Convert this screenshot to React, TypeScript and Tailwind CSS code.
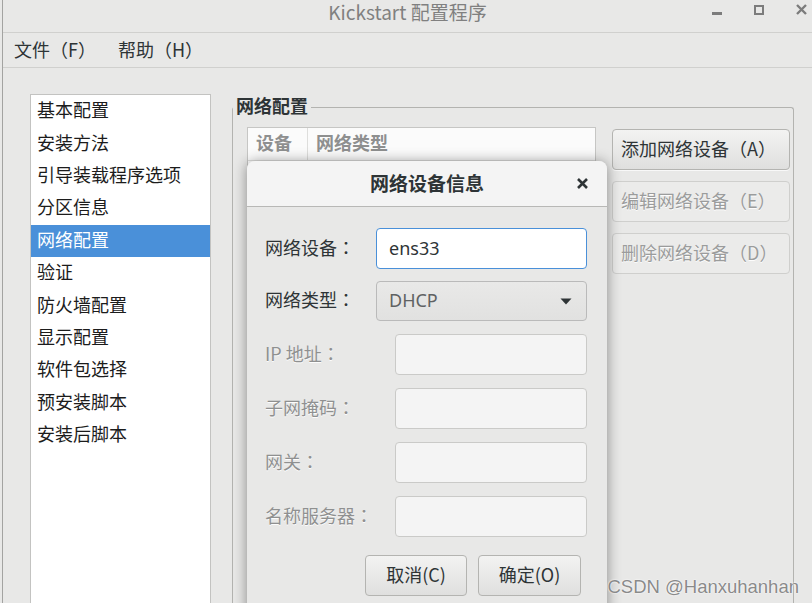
import React from 'react';

const sections = [
  '基本配置',
  '安装方法',
  '引导装载程序选项',
  '分区信息',
  '网络配置',
  '验证',
  '防火墙配置',
  '显示配置',
  '软件包选择',
  '预安装脚本',
  '安装后脚本',
];

const SideButton: React.FC<{ label: string; disabled?: boolean }> = ({ label, disabled }) => (
  <div
    className={
      disabled
        ? 'flex h-[41px] w-full items-center rounded-[4px] border border-[#cfcfcd] bg-[#ebebea] pb-[4px] pl-[8px] text-[#9b9c9c] [text-shadow:0_1px_0_rgba(255,255,255,0.9)]'
        : 'flex h-[41px] w-full items-center rounded-[4px] border border-[#b4b4b1] bg-linear-to-b from-[#f3f3f2] to-[#dfdfde] pb-[4px] pl-[8px] text-[#2e3436] shadow-[0_1px_0_rgba(255,255,255,0.7)]'
    }
  >
    {label}
  </div>
);

// fullwidth colon drawn centred, as the GTK dialog shows it
const Colon = () => <span className="font-['Noto_Sans_CJK_TC',sans-serif]">：</span>;

const FieldRow: React.FC<{ label: string; labelWidth: string; disabled?: boolean; className?: string; children: React.ReactNode }> = ({
  label,
  labelWidth,
  disabled,
  className,
  children,
}) => (
  <div className={`flex items-center ${className ?? ''}`}>
    <div
      className={
        disabled
          ? `${labelWidth} shrink-0 pb-[4px] text-[#8f9090] [text-shadow:0_1px_0_rgba(255,255,255,0.9)]`
          : `${labelWidth} shrink-0 pb-[4px] text-[#2e3436]`
      }
    >
      {label}
      <Colon />
    </div>
    {children}
  </div>
);

const DisabledEntry = () => (
  <div className="h-[41px] flex-1 rounded-[4px] border border-[#cacac8] bg-[#f4f4f4]" />
);

export default function App() {
  return (
    <div className="h-[603px] w-[812px] overflow-hidden bg-[#e8e8e7] pl-[2px] font-['Noto_Sans_CJK_SC','Noto_Sans',sans-serif] text-[18px] leading-none">
      <div className="relative h-full border-l border-[#a3a3a1]">
        {/* title bar */}
        <div className="relative flex h-[33px] justify-center border-b border-[#d0d0ce] pt-[1px]">
          <span className="text-[19px] leading-[21px] text-[#808080]">Kickstart 配置程序</span>
          <div className="absolute right-[5px] top-[4px] flex items-start">
            <div className="mr-[32px] mt-[8px] h-[3px] w-[10px] bg-[#7c7c7c]" />
            <div className="mr-[32px] mt-[1px] h-[10px] w-[10px] border-2 border-[#7c7c7c]" />
            <svg width="11" height="11" viewBox="0 0 11 11">
              <path d="M1 1 L10 10 M10 1 L1 10" stroke="#7c7c7c" strokeWidth="2.4" />
            </svg>
          </div>
        </div>

        {/* menu bar */}
        <div className="flex h-[35px] items-center border-b border-[#d0d0ce] pb-[2px] pl-[11px] text-[#2e3436]">
          <span className="w-[104px]">文件（F）</span>
          <span>帮助（H）</span>
        </div>

        {/* content */}
        <div className="flex pl-[27px] pt-[26px]">
          <div className="h-[520px] w-[181px] shrink-0 border border-[#c3c3c1] bg-white">
            {sections.map((s) => (
              <div
                key={s}
                className={
                  s === '网络配置'
                    ? 'flex h-[32.4px] items-center bg-[#4a90d9] pb-[4px] pl-[6px] text-white'
                    : 'flex h-[32.4px] items-center pb-[4px] pl-[6px] text-[#1c1c1c]'
                }
              >
                {s}
              </div>
            ))}
          </div>

          <fieldset className="ml-[21px] h-[530px] w-[562px] shrink-0 rounded-[3px] border border-b-0 border-[#b3b3b0]">
            <legend className="h-[26px] px-[3px] pb-[4px] text-[18px] leading-[22px] font-bold text-[#2e3436]">网络配置</legend>
            <div className="flex pl-[14px] pr-[3px] pt-[7px]">
              <div className="h-[500px] w-[349px] shrink-0 border border-[#c6c6c4] bg-white">
                <div className="flex h-[33px] items-center border-b border-[#dededc] bg-[#fbfbfb] font-bold text-[#8e8f8f]">
                  <div className="flex h-full w-[60px] items-center border-r border-[#dededc] pb-[5px] pl-[8px]">设备</div>
                  <div className="pb-[5px] pl-[8px]">网络类型</div>
                </div>
              </div>
              <div className="ml-[16px] flex w-[178px] flex-col gap-[11px] pt-[2px]">
                <SideButton label="添加网络设备（A）" />
                <SideButton label="编辑网络设备（E）" disabled />
                <SideButton label="删除网络设备（D）" disabled />
              </div>
            </div>
          </fieldset>
        </div>

        {/* dialog */}
        <div className="absolute left-[244px] top-[161px] h-[460px] w-[360px] overflow-hidden rounded-t-[8px] bg-[#e8e8e7] shadow-[0_1px_14px_rgba(0,0,0,0.42)]">
          <div className="relative flex h-[46px] items-center justify-center border-b border-[#b8b8b6] bg-[#f4f4f4] pb-[2px]">
            <span className="text-[19px] font-bold text-[#2e3436]">网络设备信息</span>
            <svg width="11" height="11" viewBox="0 0 11 11" className="absolute right-[19px] top-[17px]">
              <path d="M1 1 L10 10 M10 1 L1 10" stroke="#2e3436" strokeWidth="2.6" />
            </svg>
          </div>

          <div className="flex flex-col pl-[18px] pr-[20px] pt-[21px]">
            <FieldRow label="网络设备" labelWidth="w-[111px]">
              <div className="flex h-[41px] flex-1 items-center rounded-[4px] border border-[#4a90d9] bg-white pb-[2px] pl-[12px] font-['Noto_Sans',sans-serif] text-[#2e3436]">
                ens33
              </div>
            </FieldRow>

            <FieldRow label="网络类型" labelWidth="w-[111px]" className="mt-[12px]">
              <div className="flex h-[40px] flex-1 items-center justify-between rounded-[4px] border border-[#bababa] bg-linear-to-b from-[#e9e9e8] to-[#e1e1e0] pl-[12px] pr-[14px] font-['Noto_Sans',sans-serif] text-[#5f6263]">
                <span className="pb-[2px]">DHCP</span>
                <svg width="12" height="7" viewBox="0 0 12 7">
                  <path d="M0.5 0.5 L11.5 0.5 L6 6.5 Z" fill="#2e3436" />
                </svg>
              </div>
            </FieldRow>

            <FieldRow label="IP 地址" labelWidth="w-[130px]" disabled className="mt-[13px]">
              <DisabledEntry />
            </FieldRow>
            <FieldRow label="子网掩码" labelWidth="w-[130px]" disabled className="mt-[13px]">
              <DisabledEntry />
            </FieldRow>
            <FieldRow label="网关" labelWidth="w-[130px]" disabled className="mt-[13px]">
              <DisabledEntry />
            </FieldRow>
            <FieldRow label="名称服务器" labelWidth="w-[130px]" disabled className="mt-[13px]">
              <DisabledEntry />
            </FieldRow>

            <div className="mt-[18px] flex justify-end gap-[11px] pr-[6px]">
              <div className="flex h-[41px] w-[102px] items-center justify-center rounded-[4px] border border-[#b4b4b1] bg-linear-to-b from-[#f3f3f2] to-[#dfdfde] pb-[4px] text-[#2e3436]">
                取消(C)
              </div>
              <div className="flex h-[41px] w-[103px] items-center justify-center rounded-[4px] border border-[#b4b4b1] bg-linear-to-b from-[#f3f3f2] to-[#dfdfde] pb-[4px] text-[#2e3436]">
                确定(O)
              </div>
            </div>
          </div>
        </div>

        {/* watermark */}
        <div className="absolute bottom-[7px] right-[13px] font-['Liberation_Sans',sans-serif] text-[18.5px] text-[#8a8a8a] [text-shadow:0_0_2px_#fff,0_0_1px_#fff]">
          CSDN @Hanxuhanhan
        </div>
      </div>
    </div>
  );
}
